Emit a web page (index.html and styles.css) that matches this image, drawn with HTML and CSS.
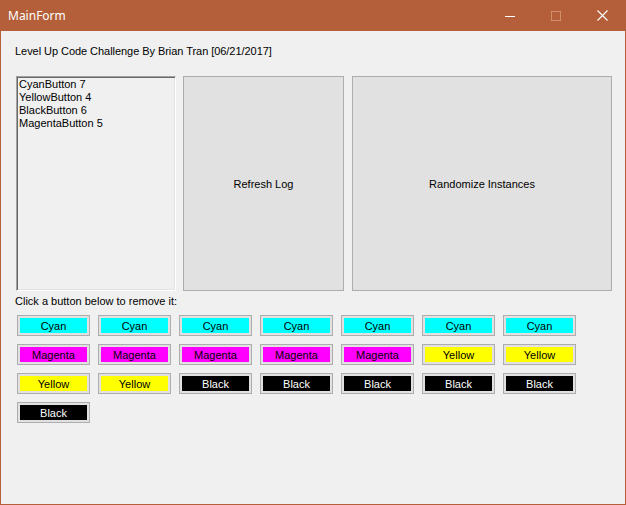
FILE: index.html
```html
<!DOCTYPE html>
<html>
<head>
<meta charset="utf-8">
<link rel="stylesheet" href="styles.css">
</head>
<body>
<div class="window">
  <div class="titlebar">
    <span class="title">MainForm</span>
    <div class="caption-buttons">
      <span class="cap-btn"><svg width="10" height="10" viewBox="0 0 10 10"><rect x="0" y="5" width="10" height="1" fill="#ffffff"/></svg></span>
      <span class="cap-btn"><svg width="10" height="10" viewBox="0 0 10 10"><rect x="0.5" y="0.5" width="9" height="9" fill="none" stroke="#d2906f" stroke-width="1"/></svg></span>
      <span class="cap-btn"><svg width="11" height="11" viewBox="0 0 11 11"><path d="M0.5 0.5 L10.5 10.5 M10.5 0.5 L0.5 10.5" stroke="#ffffff" stroke-width="1.1" fill="none"/></svg></span>
    </div>
  </div>
  <div class="client">
    <div class="heading">Level Up Code Challenge By Brian Tran [06/21/2017]</div>
    <div class="panel">
      <div class="listbox">
        <div class="item">CyanButton 7</div>
        <div class="item">YellowButton 4</div>
        <div class="item">BlackButton 6</div>
        <div class="item">MagentaButton 5</div>
      </div>
      <div class="btn refresh">Refresh Log</div>
      <div class="btn randomize">Randomize Instances</div>
    </div>
    <div class="hint">Click a button below to remove it:</div>
    <div class="grid">
      <div class="cbtn"><span class="fill cyan">Cyan</span></div>
      <div class="cbtn"><span class="fill cyan">Cyan</span></div>
      <div class="cbtn"><span class="fill cyan">Cyan</span></div>
      <div class="cbtn"><span class="fill cyan">Cyan</span></div>
      <div class="cbtn"><span class="fill cyan">Cyan</span></div>
      <div class="cbtn"><span class="fill cyan">Cyan</span></div>
      <div class="cbtn"><span class="fill cyan">Cyan</span></div>
      <div class="cbtn"><span class="fill magenta">Magenta</span></div>
      <div class="cbtn"><span class="fill magenta">Magenta</span></div>
      <div class="cbtn"><span class="fill magenta">Magenta</span></div>
      <div class="cbtn"><span class="fill magenta">Magenta</span></div>
      <div class="cbtn"><span class="fill magenta">Magenta</span></div>
      <div class="cbtn"><span class="fill yellow">Yellow</span></div>
      <div class="cbtn"><span class="fill yellow">Yellow</span></div>
      <div class="cbtn"><span class="fill yellow">Yellow</span></div>
      <div class="cbtn"><span class="fill yellow">Yellow</span></div>
      <div class="cbtn"><span class="fill black">Black</span></div>
      <div class="cbtn"><span class="fill black">Black</span></div>
      <div class="cbtn"><span class="fill black">Black</span></div>
      <div class="cbtn"><span class="fill black">Black</span></div>
      <div class="cbtn"><span class="fill black">Black</span></div>
      <div class="cbtn"><span class="fill black">Black</span></div>
    </div>
  </div>
</div>
</body>
</html>
```

FILE: styles.css
```css
* { box-sizing: border-box; }
html, body { margin: 0; padding: 0; background: #f0f0f0; }
body {
  font-family: "Liberation Sans", Arial, sans-serif;
  font-size: 11px;
  line-height: 13px;
  color: #000;
}
.window {
  width: 626px;
  height: 505px;
  display: flex;
  flex-direction: column;
}
.titlebar {
  height: 31px;
  background: #b45f39;
  display: flex;
  align-items: center;
  padding-left: 8px;
  padding-right: 1px;
  flex: none;
}
.title {
  font-family: "Noto Sans", "Open Sans", sans-serif;
  font-size: 12px;
  color: #ffffff;
  flex: 1;
  margin-top: -1px;
}
.caption-buttons { display: flex; height: 31px; }
.cap-btn {
  width: 46px;
  height: 31px;
  display: flex;
  align-items: center;
  justify-content: center;
}
.client {
  flex: 1;
  border: 1px solid #b45f39;
  border-top: none;
  background: #f0f0f0;
  padding: 14px 0 0 14px;
}
.heading { height: 13px; letter-spacing: -0.05px; }
.panel {
  display: flex;
  margin-top: 18px;
  margin-left: 1px;
  height: 215px;
}
.listbox {
  width: 160px;
  height: 215px;
  border: 1px solid;
  border-color: #a0a0a0 #ffffff #ffffff #a0a0a0;
  box-shadow: inset 1px 1px 0 #696969, inset -1px -1px 0 #e3e3e3;
  padding: 1px 0 0 2px;
  background: #f0f0f0;
}
.item { height: 13px; white-space: nowrap; }
.btn {
  height: 215px;
  background: #e1e1e1;
  border: 1px solid #adadad;
  display: flex;
  align-items: center;
  justify-content: center;
  padding-top: 2px;
}
.refresh { width: 161px; margin-left: 7px; }
.randomize { width: 260px; margin-left: 8px; }
.hint { margin-top: 4px; height: 13px; }
.grid {
  margin-top: 7px;
  margin-left: 2px;
  display: grid;
  grid-template-columns: repeat(7, 73px);
  grid-auto-rows: 21px;
  column-gap: 8px;
  row-gap: 8px;
}
.cbtn {
  border: 1px solid #adadad;
  background: #e1e1e1;
  padding: 2px;
  display: flex;
}
.fill {
  flex: 1;
  display: flex;
  align-items: center;
  justify-content: center;
  padding-top: 1px;
}
.cyan { background: #00ffff; color: #000; }
.magenta { background: #ff00ff; color: #000; }
.yellow { background: #ffff00; color: #000; }
.black { background: #000000; color: #ffffff; }
```
